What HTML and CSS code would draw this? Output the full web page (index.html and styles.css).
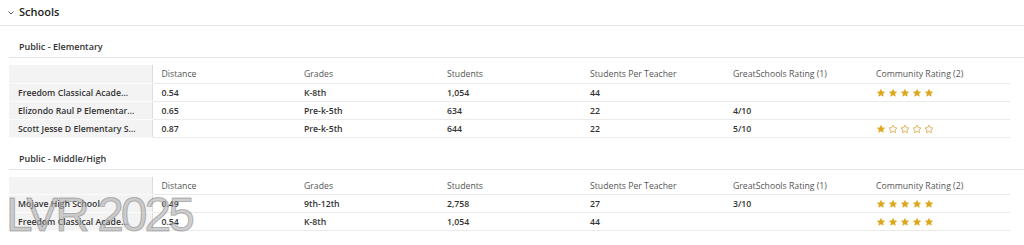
FILE: index.html
```html
<!DOCTYPE html>
<html lang="en">
<head>
<meta charset="utf-8">
<title>Schools</title>
<link rel="stylesheet" href="styles.css">
</head>
<body>
<div class="page">
  <div class="section-header">
    <svg class="chevron" width="6" height="4" viewBox="0 0 6 4"><path d="M0.5 0.5 L3 3 L5.5 0.5" fill="none" stroke="#555" stroke-width="1"/></svg>
    <span class="section-title">Schools</span>
  </div>

  <div class="group">
    <div class="group-title">Public - Elementary</div>
    <table class="schools">
      <thead>
        <tr><th class="name"></th><th>Distance</th><th>Grades</th><th>Students</th><th>Students Per Teacher</th><th>GreatSchools Rating (1)</th><th>Community Rating (2)</th></tr>
      </thead>
      <tbody>
        <tr><td class="name">Freedom Classical Acade…</td><td>0.54</td><td>K-8th</td><td>1,054</td><td>44</td><td></td><td><span class="stars s5"></span></td></tr>
        <tr><td class="name">Elizondo Raul P Elementar…</td><td>0.65</td><td>Pre-k-5th</td><td>634</td><td>22</td><td>4/10</td><td></td></tr>
        <tr><td class="name">Scott Jesse D Elementary S…</td><td>0.87</td><td>Pre-k-5th</td><td>644</td><td>22</td><td>5/10</td><td><span class="stars s1"></span></td></tr>
      </tbody>
    </table>
  </div>

  <div class="group">
    <div class="group-title">Public - Middle/High</div>
    <table class="schools">
      <thead>
        <tr><th class="name"></th><th>Distance</th><th>Grades</th><th>Students</th><th>Students Per Teacher</th><th>GreatSchools Rating (1)</th><th>Community Rating (2)</th></tr>
      </thead>
      <tbody>
        <tr><td class="name">Mojave High School</td><td>0.49</td><td>9th-12th</td><td>2,758</td><td>27</td><td>3/10</td><td><span class="stars s5"></span></td></tr>
        <tr><td class="name">Freedom Classical Acade…</td><td>0.54</td><td>K-8th</td><td>1,054</td><td>44</td><td></td><td><span class="stars s5"></span></td></tr>
      </tbody>
    </table>
  </div>

  <div class="watermark">LVR 2025</div>
</div>
<script>
  var full = '<svg width="10" height="10" viewBox="0 0 24 24"><path d="M12 1.5l3.1 6.6 7.2.9-5.3 5 1.4 7.1L12 17.6l-6.4 3.5 1.4-7.1-5.3-5 7.2-.9z" fill="#DDA71E"/></svg>';
  var empty = '<svg width="10" height="10" viewBox="0 0 24 24"><path d="M12 2.5l2.9 6.2 6.8.8-5 4.7 1.3 6.7L12 17.6l-6 3.3 1.3-6.7-5-4.7 6.8-.8z" fill="none" stroke="#D5A43A" stroke-width="1.8"/></svg>';
  document.querySelectorAll('.stars').forEach(function (el) {
    var n = el.classList.contains('s5') ? 5 : 1;
    var h = '';
    for (var i = 0; i < 5; i++) h += i < n ? full : empty;
    el.innerHTML = h;
  });
</script>
</body>
</html>
```

FILE: styles.css
```css
html, body {
  margin: 0;
  padding: 0;
  background: #fff;
}
body {
  font-family: "Open Sans", "Noto Sans", sans-serif;
  color: #333;
}
.page {
  position: relative;
  width: 1024px;
  height: 245px;
  overflow: hidden;
}
.section-header {
  height: 25px;
  border-bottom: 1px solid #e4e4e4;
  display: flex;
  align-items: center;
  padding-left: 8px;
  gap: 5px;
}
.chevron {
  margin-top: 0;
}
.section-title {
  font-size: 11px;
  font-weight: 600;
  color: #222;
  margin-top: -2px;
}
.group {
  margin-left: 9px;
}
.group-title {
  height: 32px;
  box-sizing: border-box;
  border-bottom: 1px solid #e4e4e4;
  display: flex;
  align-items: flex-end;
  padding: 0 0 4px 10px;
  font-size: 9px;
  font-weight: 600;
  color: #333;
}
.schools {
  margin-top: 7px;
  border-collapse: collapse;
  table-layout: fixed;
  width: 1001px;
  font-size: 8.7px;
}
.schools tr {
  height: 18px;
}
.schools th, .schools td {
  padding: 1px 0 0 9px;
  text-align: left;
  border-bottom: 1px solid #ebebeb;
  white-space: nowrap;
  overflow: hidden;
  vertical-align: middle;
}
.schools th {
  font-weight: 400;
  color: #555;
}
.schools td {
  font-weight: 600;
  color: #333;
}
.schools .name {
  background: #f3f3f3;
  border-right: 1px solid #dcdcdc;
  border-bottom-color: #fbfbfb;
}
.stars {
  display: flex;
  gap: 2px;
}
.stars svg {
  display: block;
}
.watermark {
  position: absolute;
  left: 6px;
  top: 188px;
  font-family: "Liberation Sans", Arial, sans-serif;
  font-size: 48px;
  letter-spacing: -3px;
  line-height: 54px;
  color: rgba(175, 175, 175, 0.6);
  -webkit-text-stroke: 1px rgba(110, 110, 110, 0.45);
  white-space: nowrap;
}
```
